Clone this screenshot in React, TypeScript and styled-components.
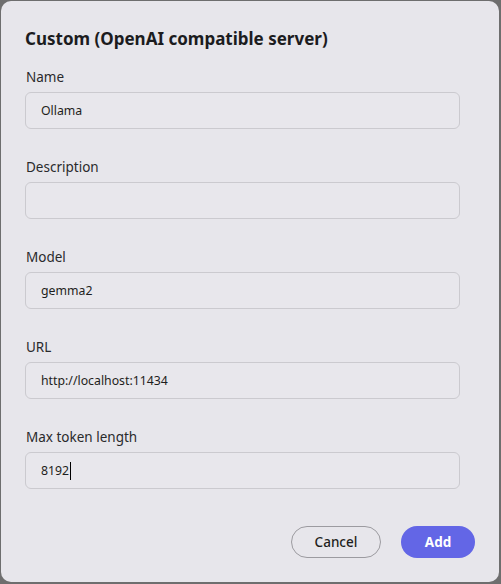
import React from "react";
import styled, { createGlobalStyle } from "styled-components";

const Global = createGlobalStyle`
  html, body { margin: 0; padding: 0; background: #6e6e6e; }
  body { font-family: "Noto Sans", "Open Sans", sans-serif; }
`;

const Backdrop = styled.div`
  width: 501px;
  height: 584px;
  padding: 1px 2px 2px 1px;
  box-sizing: border-box;
  display: flex;
`;

const Dialog = styled.div`
  flex: 1;
  background: #e7e6eb;
  border-radius: 10px;
  padding: 26px 39px 0 24px;
  box-sizing: border-box;
  display: flex;
  flex-direction: column;
`;

const Title = styled.h2`
  margin: 0 0 16px 0;
  font-size: 17px;
  font-weight: 700;
  line-height: 24px;
  color: #1c1c1e;
`;

const Form = styled.div`
  display: flex;
  flex-direction: column;
  gap: 28px;
`;

const Group = styled.div`
  display: flex;
  flex-direction: column;
  gap: 5px;
`;

const Label = styled.label`
  font-size: 13.5px;
  line-height: 20px;
  color: #2a2a2c;
  padding-left: 1px;
`;

const Field = styled.div`
  height: 37px;
  box-sizing: border-box;
  border: 1px solid #cbcacf;
  border-radius: 6px;
  background: #e8e7ec;
  display: flex;
  align-items: center;
  padding: 0 15px;
  font-size: 12.3px;
  color: #1e1e20;
`;

const Caret = styled.span`
  display: inline-block;
  width: 1px;
  height: 18px;
  background: #000;
  margin-left: 1px;
`;

const Actions = styled.div`
  margin-top: 37px;
  display: flex;
  justify-content: flex-end;
  gap: 20px;
  margin-right: -15px;
`;

const Button = styled.button<{ $primary?: boolean }>`
  height: 32px;
  border-radius: 16px;
  font-family: "Noto Sans", "Open Sans", sans-serif;
  font-size: 13.5px;
  cursor: pointer;
  padding: 0;
  width: ${(p) => (p.$primary ? "74px" : "90px")};
  font-weight: ${(p) => (p.$primary ? 700 : 500)};
  background: ${(p) => (p.$primary ? "#6366e6" : "transparent")};
  color: ${(p) => (p.$primary ? "#ffffff" : "#1e1e20")};
  border: ${(p) => (p.$primary ? "none" : "1px solid #9c9ba0")};
`;

const fields = [
  { label: "Name", value: "Ollama" },
  { label: "Description", value: "" },
  { label: "Model", value: "gemma2" },
  { label: "URL", value: "http://localhost:11434" },
  { label: "Max token length", value: "8192", caret: true },
];

export default function App() {
  return (
    <>
      <Global />
      <Backdrop>
        <Dialog>
          <Title>Custom (OpenAI compatible server)</Title>
          <Form>
            {fields.map((f) => (
              <Group key={f.label}>
                <Label>{f.label}</Label>
                <Field>
                  {f.value}
                  {f.caret && <Caret />}
                </Field>
              </Group>
            ))}
          </Form>
          <Actions>
            <Button>Cancel</Button>
            <Button $primary>Add</Button>
          </Actions>
        </Dialog>
      </Backdrop>
    </>
  );
}
